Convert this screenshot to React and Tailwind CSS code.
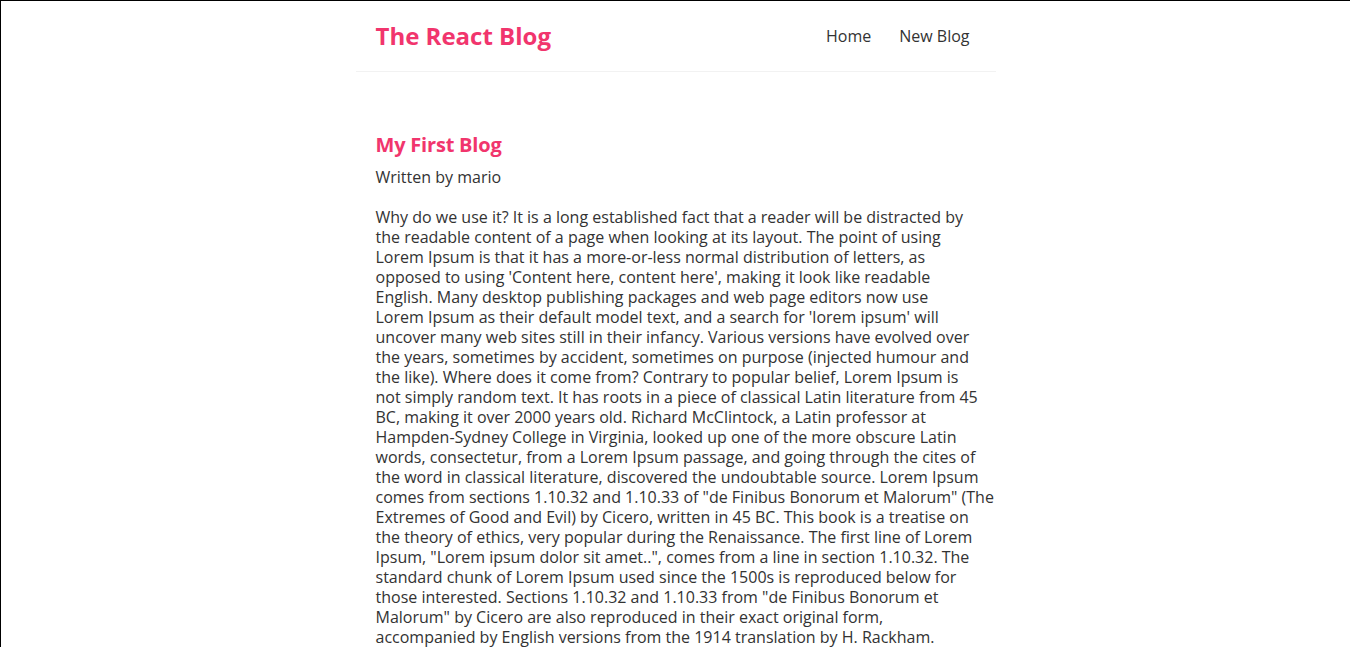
import React from 'react';

// lines broken where the original layout breaks them
const bodyLines = [
  "Why do we use it? It is a long established fact that a reader will be distracted by",
  "the readable content of a page when looking at its layout. The point of using",
  "Lorem Ipsum is that it has a more-or-less normal distribution of letters, as",
  "opposed to using 'Content here, content here', making it look like readable",
  "English. Many desktop publishing packages and web page editors now use",
  "Lorem Ipsum as their default model text, and a search for 'lorem ipsum' will",
  "uncover many web sites still in their infancy. Various versions have evolved over",
  "the years, sometimes by accident, sometimes on purpose (injected humour and",
  "the like). Where does it come from? Contrary to popular belief, Lorem Ipsum is",
  "not simply random text. It has roots in a piece of classical Latin literature from 45",
  "BC, making it over 2000 years old. Richard McClintock, a Latin professor at",
  "Hampden-Sydney College in Virginia, looked up one of the more obscure Latin",
  "words, consectetur, from a Lorem Ipsum passage, and going through the cites of",
  "the word in classical literature, discovered the undoubtable source. Lorem Ipsum",
  "comes from sections 1.10.32 and 1.10.33 of \"de Finibus Bonorum et Malorum\" (The",
  "Extremes of Good and Evil) by Cicero, written in 45 BC. This book is a treatise on",
  "the theory of ethics, very popular during the Renaissance. The first line of Lorem",
  "Ipsum, \"Lorem ipsum dolor sit amet..\", comes from a line in section 1.10.32. The",
  "standard chunk of Lorem Ipsum used since the 1500s is reproduced below for",
  "those interested. Sections 1.10.32 and 1.10.33 from \"de Finibus Bonorum et",
  "Malorum\" by Cicero are also reproduced in their exact original form,",
  "accompanied by English versions from the 1914 translation by H. Rackham.",
];

const Navbar = () => (
  <nav className="mx-auto flex max-w-[640px] items-center border-b border-[#f2f2f2] p-5">
    <h1 className="text-[24px] font-bold leading-[30px] text-[#f1356d]">The React Blog</h1>
    <div className="ml-auto">
      <a href="#" className="ml-4 p-1.5 text-[#333]">Home</a>
      <a href="#" className="ml-4 p-1.5 text-[#333]">New Blog</a>
    </div>
  </nav>
);

export default function App() {
  return (
    <div className="min-h-screen border-t border-l border-black bg-white font-['Open_Sans',sans-serif] text-[16px] leading-[20px] text-[#333]">
      <Navbar />
      <div className="mx-auto my-10 max-w-[640px] p-5">
        <div>
          <h2 className="mb-2.5 text-[20px] font-bold leading-[25px] tracking-[-0.2px] text-[#f1356d]">My First Blog</h2>
          <p>Written by mario</p>
          <div className="my-5 whitespace-nowrap">
            {bodyLines.map((line, i) => (
              <span key={i} className="block">{line}</span>
            ))}
          </div>
        </div>
      </div>
    </div>
  );
}
